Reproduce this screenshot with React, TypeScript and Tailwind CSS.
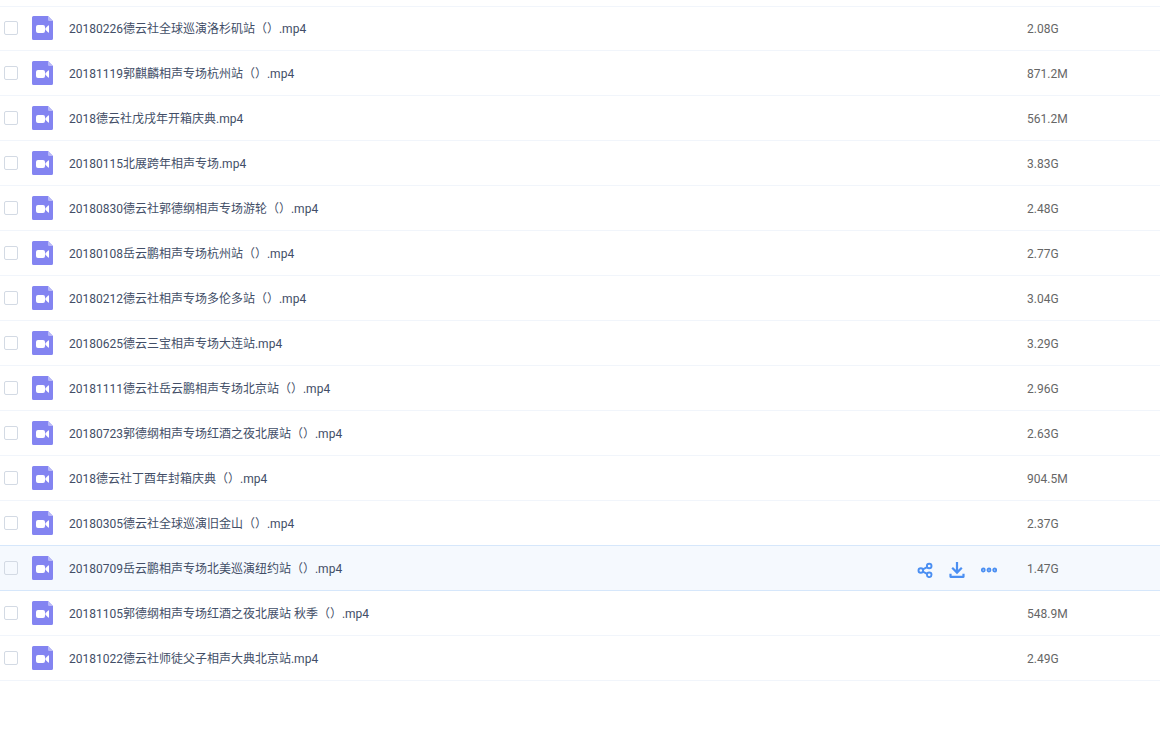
import clsx from "clsx";

const files = [
  { name: "20180226德云社全球巡演洛杉矶站（）.mp4", size: "2.08G" },
  { name: "20181119郭麒麟相声专场杭州站（）.mp4", size: "871.2M" },
  { name: "2018德云社戊戌年开箱庆典.mp4", size: "561.2M" },
  { name: "20180115北展跨年相声专场.mp4", size: "3.83G" },
  { name: "20180830德云社郭德纲相声专场游轮（）.mp4", size: "2.48G" },
  { name: "20180108岳云鹏相声专场杭州站（）.mp4", size: "2.77G" },
  { name: "20180212德云社相声专场多伦多站（）.mp4", size: "3.04G" },
  { name: "20180625德云三宝相声专场大连站.mp4", size: "3.29G" },
  { name: "20181111德云社岳云鹏相声专场北京站（）.mp4", size: "2.96G" },
  { name: "20180723郭德纲相声专场红酒之夜北展站（）.mp4", size: "2.63G" },
  { name: "2018德云社丁酉年封箱庆典（）.mp4", size: "904.5M" },
  { name: "20180305德云社全球巡演旧金山（）.mp4", size: "2.37G" },
  { name: "20180709岳云鹏相声专场北美巡演纽约站（）.mp4", size: "1.47G" },
  { name: "20181105郭德纲相声专场红酒之夜北展站 秋季（）.mp4", size: "548.9M" },
  { name: "20181022德云社师徒父子相声大典北京站.mp4", size: "2.49G" },
];

const activeIndex = 12;

const VideoFileIcon = () => (
  <svg width="21" height="24" viewBox="0 0 21 24" aria-hidden="true">
    <path d="M1.5 0H16L21 5V22.5A1.5 1.5 0 0 1 19.5 24H1.5A1.5 1.5 0 0 1 0 22.5V1.5A1.5 1.5 0 0 1 1.5 0Z" fill="#8384f1" />
    <path d="M16 0L21 5H17.2A1.2 1.2 0 0 1 16 3.8Z" fill="#b9baf8" />
    <rect x="4" y="9" width="9" height="8" rx="2" fill="#fff" />
    <path d="M13.4 12.2L16.2 9.4Q17 9 17 9.9V16.1Q17 17 16.2 16.6L13.4 13.8Z" fill="#fff" />
  </svg>
);

const ShareIcon = () => (
  <svg width="16" height="16" viewBox="0 0 16 16" fill="none" stroke="#4b8ff2" strokeWidth="1.9" aria-hidden="true">
    <circle cx="3.8" cy="8.5" r="2.3" />
    <circle cx="12.2" cy="4" r="2.3" />
    <circle cx="12.2" cy="12.8" r="2.3" />
    <path d="M5.9 7.3L10.1 5.1M5.9 9.7L10.1 11.8" />
  </svg>
);

const DownloadIcon = () => (
  <svg width="16" height="16" viewBox="0 0 16 16" fill="none" stroke="#4b8ff2" strokeWidth="2.2" aria-hidden="true">
    <path d="M8 0V10.5M3.2 5.8L8 10.6L12.8 5.8" />
    <path d="M1.5 11.8V14.8H14.5V11.8" strokeLinejoin="round" />
  </svg>
);

const MoreIcon = () => (
  <svg width="16" height="16" viewBox="0 0 16 16" fill="none" stroke="#4b8ff2" strokeWidth="1.8" aria-hidden="true">
    <circle cx="2.3" cy="8" r="1.5" />
    <circle cx="8" cy="8" r="1.5" />
    <circle cx="13.7" cy="8" r="1.5" />
  </svg>
);

const RowActions = () => (
  <div className="flex justify-end gap-4 pt-1 pr-[30px]">
    <button type="button" aria-label="分享">
      <ShareIcon />
    </button>
    <button type="button" aria-label="下载">
      <DownloadIcon />
    </button>
    <button type="button" aria-label="更多">
      <MoreIcon />
    </button>
  </div>
);

export default function App() {
  return (
    <main
      lang="zh-Hans"
      className="min-h-screen bg-white pt-1.5 font-[Roboto,'Noto_Sans_CJK_SC',sans-serif] text-xs"
    >
      <table className="w-full border-separate border-spacing-0 text-left">
        <tbody>
          {files.map((file, i) => {
            const active = i === activeIndex;
            const cell = clsx(
              "h-[45px] border-b p-0",
              i === 0 && "shadow-[inset_0_1px_#f1f5fb]",
              active || i === activeIndex - 1 ? "border-[#d6e7fb]" : "border-[#f1f5fb]",
            );
            return (
              <tr key={file.name} className={clsx(active && "bg-[#f5f9fe]")}>
                <td className={clsx(cell, "w-8")}>
                  <input
                    id={`file-${i}`}
                    type="checkbox"
                    className="ml-1 block size-3.5 appearance-none rounded-xs border border-[#d3dae4] checked:bg-[#4b8ff2]"
                  />
                </td>
                <td className={clsx(cell, "w-[37px]")}>
                  <VideoFileIcon />
                </td>
                <td className={cell}>
                  <label htmlFor={`file-${i}`} className="block pt-0.5 whitespace-nowrap text-[#424e67]">
                    {file.name}
                  </label>
                </td>
                <td className={clsx(cell, "w-40")}>{active && <RowActions />}</td>
                <td className={clsx(cell, "w-[133px]")}>
                  <span className="block pt-0.5 text-[#666666]">{file.size}</span>
                </td>
              </tr>
            );
          })}
        </tbody>
      </table>
    </main>
  );
}
